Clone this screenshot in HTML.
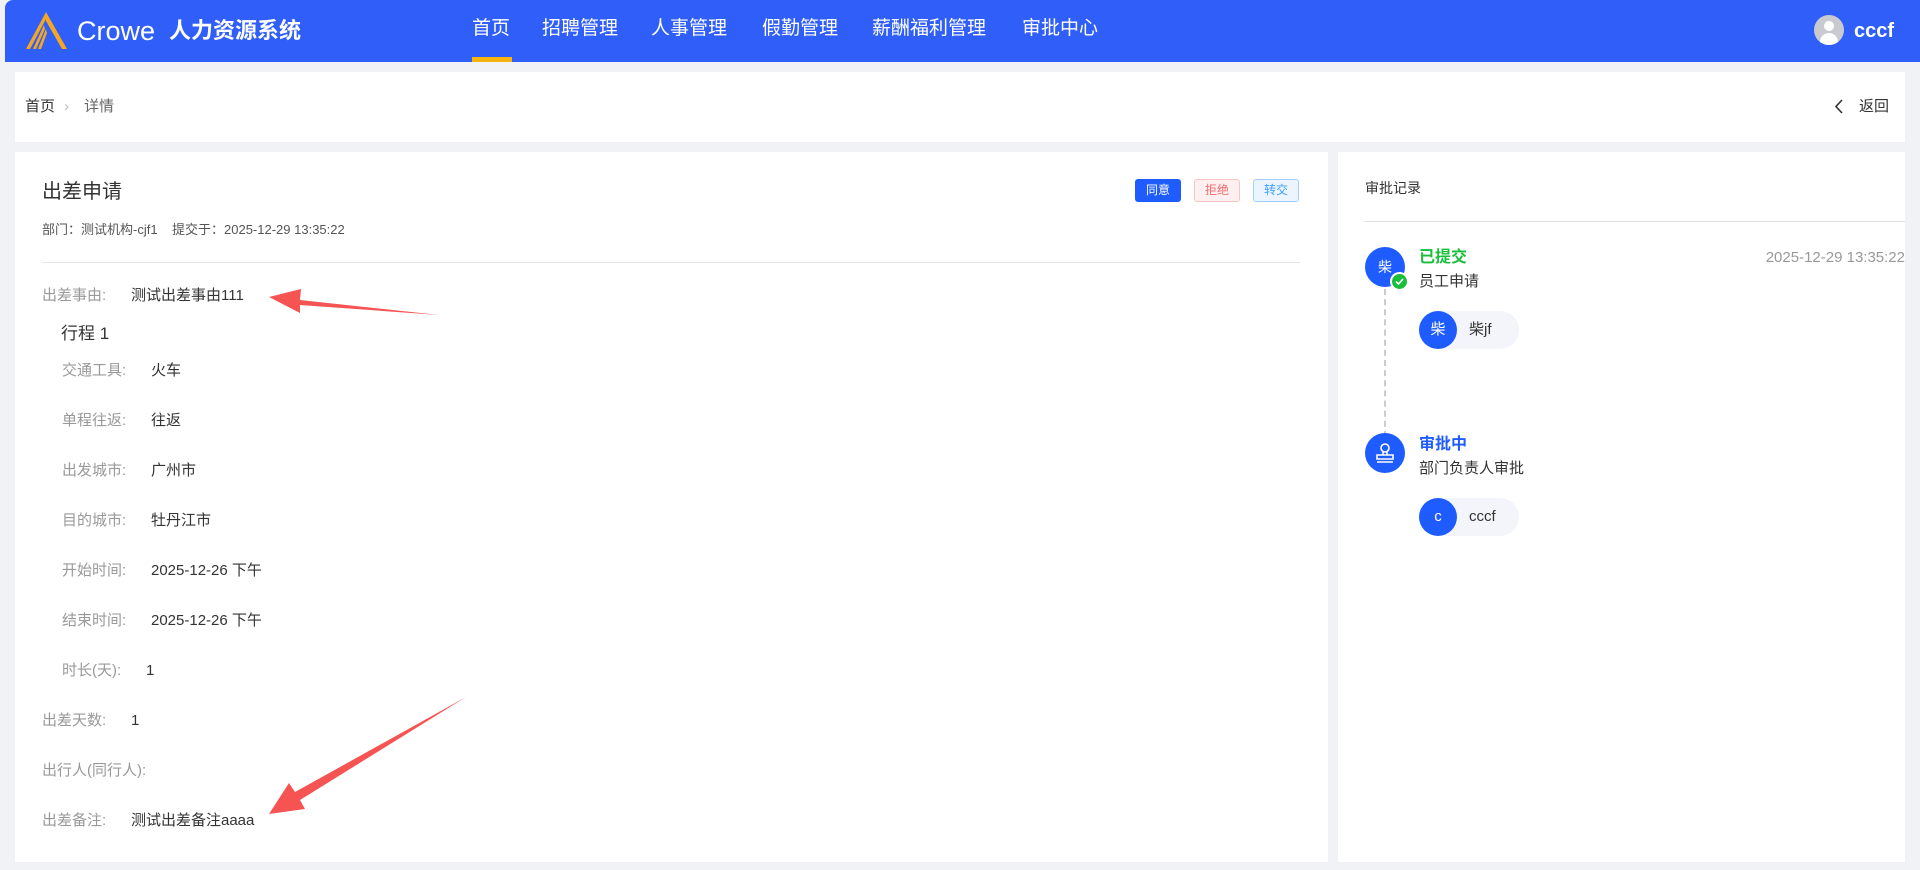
<!DOCTYPE html>
<html><head><meta charset="utf-8"><style>
*{margin:0;padding:0;box-sizing:border-box}
body{width:1920px;height:870px;background:#f0f2f5;font-family:"Liberation Sans","Noto Sans CJK SC",sans-serif;position:relative;overflow:hidden;color:#333}
.abs{position:absolute;white-space:nowrap;line-height:20px}
.hdr{position:absolute;left:5px;top:0;width:1915px;height:62px;background:#2f5ef8;border-top-left-radius:8px}
.nav{position:absolute;top:18px;color:#fff;font-size:19px;line-height:22px}
.card{position:absolute;background:#fff}
.lbl{color:#999;font-size:15px}
.val{color:#333;font-size:15px}
.btn{position:absolute;top:179px;height:23px;border-radius:3px;font-size:12px;text-align:center;line-height:21px;width:46px}
.pill{position:absolute;left:1419px;width:100px;height:38px;border-radius:19px;background:#f3f5fa}
.pill .av{position:absolute;left:0;top:0;width:38px;height:38px;border-radius:50%;background:#1f5cff;color:#fff;font-size:15px;text-align:center;line-height:38px}
.pill .t{position:absolute;left:50px;top:9px;font-size:15px;color:#333;line-height:20px}
</style></head><body>
<div class="hdr"></div>
<svg class="abs" style="left:24px;top:11px" width="44" height="40" viewBox="0 0 44 40">
<path d="M22 1 L43 38 L38 38 L22 10 Z" fill="#f5a623"/>
<path d="M22 1 L2 38 L6 38 L22 8 Z" fill="#f5a623"/>
<path d="M20 14 L9 38 L12 38 L21 18Z M22 18 L14 38 L17 38 L23 22Z" fill="#f5a623"/>
</svg>
<div class="abs" style="left:77px;top:15px;font-size:27px;color:#fff;font-weight:300;line-height:32px">Crowe</div>
<div class="abs" style="left:169px;top:17px;font-size:22px;color:#fff;font-weight:bold;line-height:28px">人力资源系统</div>
<div class="nav" style="left:472px">首页</div>
<div class="abs" style="left:472px;top:57px;width:40px;height:5px;background:#f6b40d"></div>
<div class="nav" style="left:542px">招聘管理</div>
<div class="nav" style="left:651px">人事管理</div>
<div class="nav" style="left:762px">假勤管理</div>
<div class="nav" style="left:872px">薪酬福利管理</div>
<div class="nav" style="left:1022px">审批中心</div>
<div class="abs" style="left:1814px;top:15px;width:30px;height:30px;border-radius:50%;background:#c8cacf;overflow:hidden">
<div style="position:absolute;left:10px;top:6px;width:10px;height:10px;border-radius:50%;background:#fff"></div>
<div style="position:absolute;left:6px;top:18px;width:18px;height:14px;border-radius:9px 9px 0 0;background:#fff"></div></div>
<div class="abs" style="left:1854px;top:19px;color:#fff;font-size:20px;font-weight:bold;line-height:24px">cccf</div>

<div class="card" style="left:15px;top:72px;width:1890px;height:70px"></div>
<div class="abs" style="left:25px;top:97px;font-size:15px;color:#333">首页</div>
<div class="abs" style="left:64px;top:97px;font-size:15px;color:#bbb">›</div>
<div class="abs" style="left:84px;top:97px;font-size:15px;color:#666">详情</div>
<svg class="abs" style="left:1834px;top:98px" width="10" height="17"><path d="M8 2 L2 8.5 L8 15" stroke="#333" stroke-width="1.6" fill="none"/></svg>
<div class="abs" style="left:1859px;top:97px;font-size:15px;color:#333">返回</div>

<div class="card" style="left:15px;top:152px;width:1313px;height:710px"></div>
<div class="card" style="left:1338px;top:152px;width:567px;height:710px"></div>
<div class="abs" style="left:1905px;top:62px;width:15px;height:808px;background:#f0f2f5"></div>

<div class="abs" style="left:42px;top:180px;font-size:20px;color:#333;line-height:24px">出差申请</div>
<div class="abs" style="left:42px;top:220px;font-size:13px;color:#555">部门：测试机构-cjf1 &nbsp;&nbsp; 提交于：2025-12-29 13:35:22</div>
<div class="btn" style="left:1135px;background:#1f5cff;color:#fff;border:1px solid #1f5cff">同意</div>
<div class="btn" style="left:1194px;background:#fef0f0;color:#f56c6c;border:1px solid #fbc4c4">拒绝</div>
<div class="btn" style="left:1253px;background:#ecf5ff;color:#409eff;border:1px solid #a0cfff">转交</div>
<div class="abs" style="left:42px;top:262px;width:1258px;height:1px;background:#e4e7ed"></div>

<div class="abs lbl" style="left:42px;top:286px">出差事由:</div><div class="abs val" style="left:131px;top:286px">测试出差事由111</div>
<div class="abs" style="left:61px;top:324px;font-size:17px;color:#333">行程 1</div>
<div class="abs lbl" style="left:62px;top:361px">交通工具:</div><div class="abs val" style="left:151px;top:361px">火车</div>
<div class="abs lbl" style="left:62px;top:411px">单程往返:</div><div class="abs val" style="left:151px;top:411px">往返</div>
<div class="abs lbl" style="left:62px;top:461px">出发城市:</div><div class="abs val" style="left:151px;top:461px">广州市</div>
<div class="abs lbl" style="left:62px;top:511px">目的城市:</div><div class="abs val" style="left:151px;top:511px">牡丹江市</div>
<div class="abs lbl" style="left:62px;top:561px">开始时间:</div><div class="abs val" style="left:151px;top:561px">2025-12-26 下午</div>
<div class="abs lbl" style="left:62px;top:611px">结束时间:</div><div class="abs val" style="left:151px;top:611px">2025-12-26 下午</div>
<div class="abs lbl" style="left:62px;top:661px">时长(天):</div><div class="abs val" style="left:146px;top:661px">1</div>
<div class="abs lbl" style="left:42px;top:711px">出差天数:</div><div class="abs val" style="left:131px;top:711px">1</div>
<div class="abs lbl" style="left:42px;top:761px">出行人(同行人):</div>
<div class="abs lbl" style="left:42px;top:811px">出差备注:</div><div class="abs val" style="left:131px;top:811px">测试出差备注aaaa</div>

<svg class="abs" style="left:0;top:0" width="1920" height="870">
<path d="M439 315 L300 300 L301 289 L269 297 L300 313 L300 305 Z" fill="#f65353"/>
<path d="M466 697 L295 792 L289 783 L269 814 L305 809 L300 800 Z" fill="#f65353"/>
</svg>

<div class="abs" style="left:1365px;top:178px;font-size:14px;color:#333">审批记录</div>
<div class="abs" style="left:1365px;top:221px;width:540px;height:1px;background:#dcdfe6"></div>
<div class="abs" style="left:1384px;top:289px;height:148px;border-left:2px dashed #ccc"></div>
<div class="abs" style="left:1365px;top:247px;width:40px;height:40px;border-radius:50%;background:#1f5cff;color:#fff;font-size:14px;text-align:center;line-height:40px">柴</div>
<div class="abs" style="left:1390px;top:272px;width:19px;height:19px;border-radius:50%;background:#19be3b;border:2px solid #fff"></div>
<svg class="abs" style="left:1394px;top:276px" width="11" height="11"><path d="M2 5.5 L4.5 8 L9 3" stroke="#fff" stroke-width="1.6" fill="none"/></svg>
<div class="abs" style="left:1419px;top:248px;font-size:16px;color:#19be3b;font-weight:bold">已提交</div>
<div class="abs" style="left:1905px;top:248px;font-size:15px;color:#999;transform:translateX(-100%)">2025-12-29 13:35:22</div>
<div class="abs" style="left:1419px;top:272px;font-size:15px;color:#333">员工申请</div>
<div class="pill" style="top:311px"><div class="av">柴</div><div class="t">柴jf</div></div>

<div class="abs" style="left:1365px;top:433px;width:40px;height:40px;border-radius:50%;background:#1f5cff"></div>
<svg class="abs" style="left:1373px;top:441px" width="24" height="24" viewBox="0 0 24 24" fill="none" stroke="#fff" stroke-width="1.6">
<circle cx="12" cy="7" r="4"/><path d="M10 11 L10 14 M14 11 L14 14 M4 14 H20 V18 H4 Z M4 21 H20"/></svg>
<div class="abs" style="left:1419px;top:435px;font-size:16px;color:#1f5cff;font-weight:bold">审批中</div>
<div class="abs" style="left:1419px;top:459px;font-size:15px;color:#333">部门负责人审批</div>
<div class="pill" style="top:498px"><div class="av">c</div><div class="t">cccf</div></div>
</body></html>
